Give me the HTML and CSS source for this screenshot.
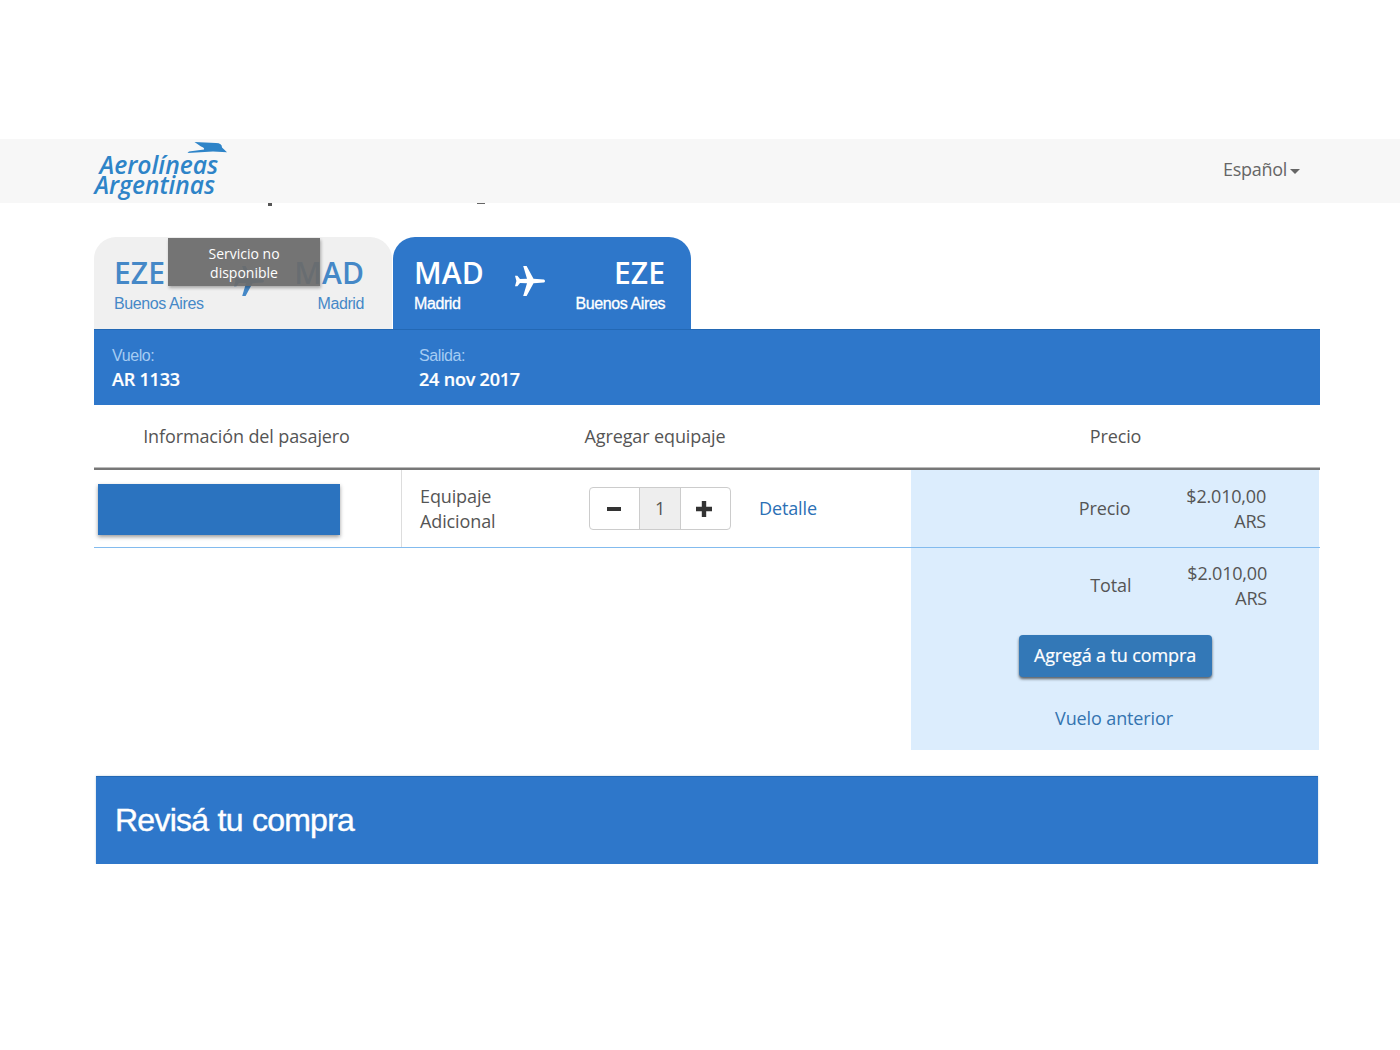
FILE: index.html
```html
<!DOCTYPE html>
<html lang="es">
<head>
<meta charset="utf-8">
<title>Aerolíneas Argentinas</title>
<link rel="stylesheet" href="styles.css">
</head>
<body>
<header class="topbar">
  <svg class="logo" viewBox="0 0 140 64" width="140" height="64" aria-label="Aerolíneas Argentinas">
    <path d="M103.5 3 L125 4 Q131 4 131 8.5 L136 13.2 L122 12.6 L96.5 14 L98 12.4 L113 10.6 Q114 9 110 7.4 Z"/>
    <text transform="translate(8.5 35) scale(.9 1)" x="0" y="0" textLength="132" lengthAdjust="spacingAndGlyphs">Aerolíneas</text>
    <text transform="translate(3.5 54.5) scale(.9 1)" x="0" y="0" textLength="134" lengthAdjust="spacingAndGlyphs">Argentinas</text>
  </svg>
  <div class="lang">Español<i class="caret"></i></div>
</header>
<div class="covered-title"><i class="stem"></i><i class="tail"></i></div>
<main class="page">
  <nav class="tabs">
    <div class="tab tab-off">
      <div class="place"><b>EZE</b><span>Buenos Aires</span></div>
      <svg class="plane" viewBox="0 0 32 32" width="32" height="32"><path d="M30 14.4 Q32 16 30 17.6 L19.5 18.2 L12.6 31 H9.2 L13 18.3 L6 18 L3.4 21.2 H1 L2.4 16 L1 10.8 H3.4 L6 14 L13 13.7 L9.2 1 H12.6 L19.5 13.8 Z"/></svg>
      <div class="place right"><b>MAD</b><span>Madrid</span></div>
      <div class="tip">Servicio no<br>disponible</div>
    </div>
    <div class="tab tab-on">
      <div class="place"><b>MAD</b><span>Madrid</span></div>
      <svg class="plane" viewBox="0 0 32 32" width="32" height="32"><path d="M30 14.4 Q32 16 30 17.6 L19.5 18.2 L12.6 31 H9.2 L13 18.3 L6 18 L3.4 21.2 H1 L2.4 16 L1 10.8 H3.4 L6 14 L13 13.7 L9.2 1 H12.6 L19.5 13.8 Z"/></svg>
      <div class="place right"><b>EZE</b><span>Buenos Aires</span></div>
    </div>
  </nav>
  <section class="flight">
    <div><span>Vuelo:</span><b>AR 1133</b></div>
    <div><span>Salida:</span><b>24 nov 2017</b></div>
  </section>
  <div class="row head"><div>Información del pasajero</div><div>Agregar equipaje</div><div>Precio</div></div>
  <div class="row item">
    <div class="passenger"><div class="masked"></div></div>
    <div class="baggage">
      <div class="kind">Equipaje<br>Adicional</div>
      <div class="stepper">
        <button><svg width="16" height="16"><path d="M1 6h14v4H1z"/></svg></button><output>1</output><button><svg width="18" height="18"><path d="M6.8 1h4.4v5.8H17v4.4h-5.8V17H6.8v-5.8H1V6.8h5.8z"/></svg></button>
      </div>
      <a class="detail">Detalle</a>
    </div>
    <div class="price"><span>Precio</span><span class="amount">$2.010,00<br>ARS</span></div>
  </div>
  <aside class="summary">
    <div class="price total"><span>Total</span><span class="amount">$2.010,00<br>ARS</span></div>
    <button class="add">Agregá a tu compra</button>
    <a class="previous">Vuelo anterior</a>
  </aside>
  <section class="review">Revisá tu compra</section>
</main>
</body>
</html>
```
FILE: styles.css
```css
* { box-sizing: border-box; }
body { margin: 0; padding-top: 139px; background: #fff; color: #555; font: 18px/25px "Open Sans", sans-serif; letter-spacing: -.12px; }
.topbar { height: 64px; background: #f7f7f7; display: flex; justify-content: space-between; padding: 0 100px 0 91px; }
.logo { fill: #2e84c8; }
.logo text { font: italic 600 25px "Open Sans", sans-serif; letter-spacing: 0; }
.lang { display: flex; align-items: center; gap: 3px; color: #666; padding-bottom: 3px; letter-spacing: -.3px; }
.caret { border: 5px solid transparent; border-top-color: #666; border-bottom: 0; margin-top: 3px; }
.covered-title { height: 34px; padding-left: 268px; display: flex; gap: 205px; }
.stem { width: 4px; height: 3px; background: #555; }
.tail { width: 8px; height: 1px; background: #666; }
.page { width: 1226px; margin-left: 94px; }
.tabs { display: flex; gap: 1px; height: 92px; }
.tab { position: relative; width: 298px; border-radius: 22px 22px 0 0; padding: 19px 28px 0 20px; display: flex; justify-content: space-between; }
.tab-off { background: #f0f0f0; color: #4588c7; }
.tab-on { background: #2e77ca; color: #fff; padding: 19px 26px 0 21px; }
.place { display: flex; flex-direction: column; }
.right { align-items: flex-end; }
.place b { font-size: 30px; line-height: 34px; font-weight: 600; letter-spacing: .1px; }
.place span { font: 16px/20px "Liberation Sans", sans-serif; margin-top: 4px; white-space: nowrap; letter-spacing: -.4px; }
.tab-on .place span { -webkit-text-stroke: .3px #fff; }
.plane { fill: currentColor; margin-top: 9px; }
.tip { position: absolute; left: 74px; top: 1px; width: 152px; height: 48px; padding-top: 6px; background: rgba(107,107,107,.93); color: #fff; font-size: 14px; line-height: 19px; text-align: center; letter-spacing: 0; box-shadow: 1px 2px 3px rgba(0,0,0,.3); }
.flight { display: grid; grid-template-columns: 307px 1fr; height: 76px; padding: 16px 18px 0; background: #2e77ca; border-top: 1px solid #2368b4; color: #fff; }
.flight div { display: flex; flex-direction: column; }
.flight span { font: 16px/20px "Liberation Sans", sans-serif; color: #a5ccf3; letter-spacing: -.4px; }
.flight b { line-height: 26px; font-weight: 600; -webkit-text-stroke: .2px #fff; letter-spacing: -.2px; }
.row { display: grid; grid-template-columns: 308px 509px 1fr; grid-template-rows: 100%; }
.head { height: 65px; border-bottom: 2px solid #777; box-shadow: inset 0 -1px #bbb; text-align: center; line-height: 63px; }
.head > :nth-child(-n+2) { padding-right: 3px; }
.item { height: 78px; border-bottom: 1px solid #83bbee; }
.passenger { border-right: 1px solid #ddd; padding: 14px 4px 0; }
.masked { width: 242px; height: 51px; background: #2b73bf; box-shadow: 0 2px 4px rgba(0,0,0,.4); }
.baggage { display: flex; align-items: center; padding-left: 18px; }
.kind { width: 169px; }
.stepper { display: flex; width: 142px; height: 43px; border: 1px solid #ccc; border-radius: 4px; }
.stepper button { width: 49px; border: 0; background: none; padding: 0; display: grid; place-items: center; fill: #333; }
.stepper button:last-child { padding-right: 3px; }
.stepper output { width: 43px; background: #eee; border: solid #ccc; border-width: 0 1px; text-align: center; line-height: 41px; }
.detail { margin-left: 28px; color: #2c70b5; }
.price { display: flex; align-items: center; justify-content: flex-end; gap: 56px; background: #dcedfd; padding-right: 53px; margin-right: 1px; }
.amount { text-align: right; letter-spacing: -.2px; }
.summary { width: 408px; height: 202px; margin-left: 817px; background: #dcedfd; display: flex; flex-direction: column; align-items: center; }
.total { height: 75px; width: 100%; margin: 0; padding-right: 52px; }
.add { width: 193px; height: 42px; margin-top: 12px; border: 0; border-radius: 4px; background: #3378b7; color: #fff; font: 18px "Open Sans", sans-serif; letter-spacing: -.12px; -webkit-text-stroke: .2px #fff; padding: 0 0 2px; white-space: nowrap; box-shadow: 0 2px 3px rgba(0,0,0,.6); }
.previous { margin: 29px 2px 0 0; color: #3474b0; }
.review { margin: 26px 2px 0; height: 88px; padding-left: 19px; background: #2e77ca; border-top: 1px solid #2368b4; box-shadow: 0 0 2px #bcd; color: #fff; font: 32px/87px "Liberation Sans", sans-serif; letter-spacing: -.74px; word-spacing: 1px; -webkit-text-stroke: .4px #fff; }
```
